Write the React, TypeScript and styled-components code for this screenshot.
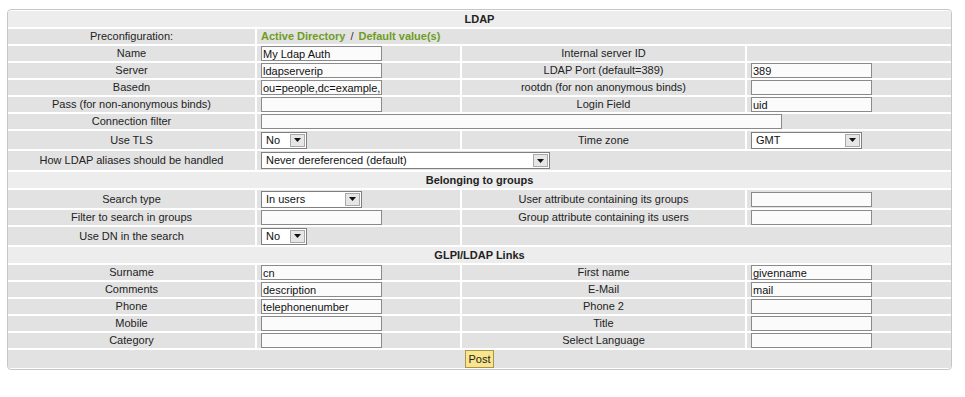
import React from "react";
import styled, { createGlobalStyle } from "styled-components";

const GlobalStyle = createGlobalStyle`
  body {
    margin: 0;
    background: #fff;
    font-family: "Liberation Sans", Arial, sans-serif;
    font-size: 11px;
    color: #222;
  }
`;

const Frame = styled.div`
  margin: 9px 0 0 7px;
  width: 943px;
  border: 1px solid #c6c6c6;
  border-radius: 4px;
  padding: 1px 0;
  background: #fff;
`;

const Form = styled.div`
  display: grid;
  grid-template-columns: 247px 203px 283px 204px;
  grid-template-rows: 16px repeat(6, 15px) 18px 19px 16px 18px 15px 18px 16px repeat(5, 15px) 18px;
  gap: 2px;
`;

const HeadCell = styled.div`
  grid-column: 1 / -1;
  background: #ededed;
  font-weight: bold;
  display: flex;
  align-items: center;
  justify-content: center;
  line-height: 1;
`;

const Label = styled.div`
  background: #e2e2e2;
  display: flex;
  align-items: center;
  justify-content: center;
  white-space: nowrap;
  line-height: 1;
`;

const Field = styled.div<{ $span?: number; $center?: boolean }>`
  grid-column: span ${(p) => p.$span ?? 1};
  background: #e2e2e2;
  display: flex;
  align-items: center;
  justify-content: ${(p) => (p.$center ? "center" : "flex-start")};
  padding-left: ${(p) => (p.$center ? "0" : "4px")};
  line-height: 1;
`;

const TextInput = styled.input<{ $w?: number }>`
  box-sizing: border-box;
  width: ${(p) => p.$w ?? 121}px;
  height: 15px;
  margin: 0;
  padding: 0 1px;
  border: 1px solid #8a8a8a;
  background: #fbfbfb;
  font: 11px "Liberation Sans", Arial, sans-serif;
  color: #111;
  outline: none;
`;

const SelectBox = styled.div<{ $w: number }>`
  box-sizing: border-box;
  width: ${(p) => p.$w}px;
  height: 17px;
  border: 1px solid #7f7f7f;
  background: #fff;
  display: flex;
  align-items: center;
  justify-content: space-between;
  color: #111;
`;

const SelectValue = styled.span`
  padding-left: 4px;
  white-space: nowrap;
`;

const ArrowButton = styled.span`
  box-sizing: border-box;
  width: 15px;
  height: 13px;
  margin-right: 1px;
  border: 1px solid #a9a9a9;
  background: #e6e6e6;
  display: flex;
  align-items: center;
  justify-content: center;
`;

const PresetLink = styled.a`
  color: #6f9c1f;
  font-weight: bold;
  text-decoration: none;
`;

const Slash = styled.span`
  padding: 0 5px;
  color: #333;
`;

const PostButton = styled.button`
  height: 18px;
  padding: 0 2px;
  border: 1px solid #a89550;
  background: #fbe58c;
  font: 11px "Liberation Sans", Arial, sans-serif;
  color: #222;
  cursor: pointer;
`;

function Select({ value, width }: { value: string; width: number }) {
  return (
    <SelectBox $w={width}>
      <SelectValue>{value}</SelectValue>
      <ArrowButton>
        <svg width="7" height="4" viewBox="0 0 7 4">
          <path d="M0 0h7L3.5 4z" fill="#111" />
        </svg>
      </ArrowButton>
    </SelectBox>
  );
}

type Pair = [string, string | null, string, string | null | undefined];

function PairRow({ row }: { row: Pair }) {
  const [l1, v1, l2, v2] = row;
  return (
    <>
      <Label>{l1}</Label>
      <Field>{v1 !== null && <TextInput defaultValue={v1} />}</Field>
      <Label>{l2}</Label>
      <Field>{v2 !== null && v2 !== undefined && <TextInput defaultValue={v2} />}</Field>
    </>
  );
}

const serverRows: Pair[] = [
  ["Name", "My Ldap Auth", "Internal server ID", null],
  ["Server", "ldapserverip", "LDAP Port (default=389)", "389"],
  ["Basedn", "ou=people,dc=example,dc=com", "rootdn (for non anonymous binds)", ""],
  ["Pass (for non-anonymous binds)", "", "Login Field", "uid"],
];

const linkRows: Pair[] = [
  ["Surname", "cn", "First name", "givenname"],
  ["Comments", "description", "E-Mail", "mail"],
  ["Phone", "telephonenumber", "Phone 2", ""],
  ["Mobile", "", "Title", ""],
  ["Category", "", "Select Language", ""],
];

export default function App() {
  return (
    <>
      <GlobalStyle />
      <Frame>
        <Form>
          <HeadCell>LDAP</HeadCell>
          <Label>Preconfiguration:</Label>
          <Field $span={3}>
            <PresetLink href="#">Active Directory</PresetLink>
            <Slash>/</Slash>
            <PresetLink href="#">Default value(s)</PresetLink>
          </Field>
          {serverRows.map((r) => (
            <PairRow key={r[0]} row={r} />
          ))}
          <Label>Connection filter</Label>
          <Field $span={3}>
            <TextInput $w={521} defaultValue="" />
          </Field>
          <Label>Use TLS</Label>
          <Field>
            <Select value="No" width={46} />
          </Field>
          <Label>Time zone</Label>
          <Field>
            <Select value="GMT" width={111} />
          </Field>
          <Label>How LDAP aliases should be handled</Label>
          <Field $span={3}>
            <Select value="Never dereferenced (default)" width={289} />
          </Field>

          <HeadCell>Belonging to groups</HeadCell>
          <Label>Search type</Label>
          <Field>
            <Select value="In users" width={101} />
          </Field>
          <Label>User attribute containing its groups</Label>
          <Field>
            <TextInput defaultValue="" />
          </Field>
          <Label>Filter to search in groups</Label>
          <Field>
            <TextInput defaultValue="" />
          </Field>
          <Label>Group attribute containing its users</Label>
          <Field>
            <TextInput defaultValue="" />
          </Field>
          <Label>Use DN in the search</Label>
          <Field>
            <Select value="No" width={46} />
          </Field>
          <Field $span={2} />

          <HeadCell>GLPI/LDAP Links</HeadCell>
          {linkRows.map((r) => (
            <PairRow key={r[0]} row={r} />
          ))}
          <Field $span={4} $center>
            <PostButton type="button">Post</PostButton>
          </Field>
        </Form>
      </Frame>
    </>
  );
}
